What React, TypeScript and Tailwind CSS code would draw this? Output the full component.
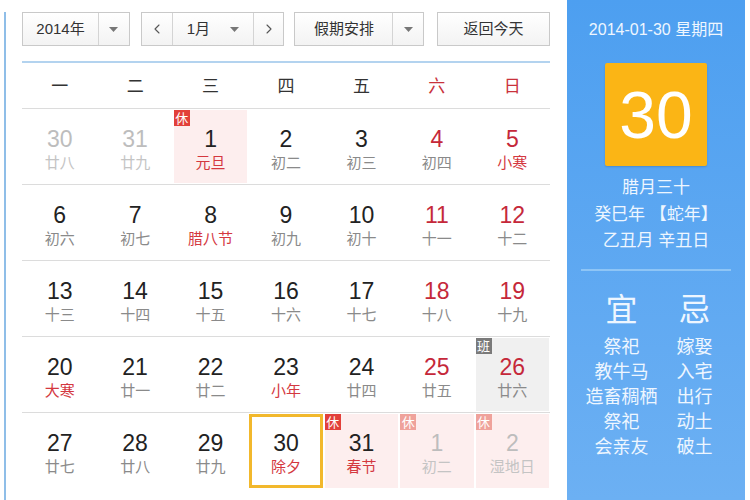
import { ChevronLeft, ChevronRight } from 'lucide-react';

type Day = {
  n: number;
  lunar: string;
  other?: boolean;
  redNum?: boolean;
  redLunar?: boolean;
  bg?: 'rest' | 'work';
  badge?: 'rest' | 'restLight' | 'work';
  today?: boolean;
};

const WEEK = ['一', '二', '三', '四', '五', '六', '日'];

const ROWS: Day[][] = [
  [
    { n: 30, lunar: '廿八', other: true },
    { n: 31, lunar: '廿九', other: true },
    { n: 1, lunar: '元旦', redLunar: true, bg: 'rest', badge: 'rest' },
    { n: 2, lunar: '初二' },
    { n: 3, lunar: '初三' },
    { n: 4, lunar: '初四', redNum: true },
    { n: 5, lunar: '小寒', redNum: true, redLunar: true },
  ],
  [
    { n: 6, lunar: '初六' },
    { n: 7, lunar: '初七' },
    { n: 8, lunar: '腊八节', redLunar: true },
    { n: 9, lunar: '初九' },
    { n: 10, lunar: '初十' },
    { n: 11, lunar: '十一', redNum: true },
    { n: 12, lunar: '十二', redNum: true },
  ],
  [
    { n: 13, lunar: '十三' },
    { n: 14, lunar: '十四' },
    { n: 15, lunar: '十五' },
    { n: 16, lunar: '十六' },
    { n: 17, lunar: '十七' },
    { n: 18, lunar: '十八', redNum: true },
    { n: 19, lunar: '十九', redNum: true },
  ],
  [
    { n: 20, lunar: '大寒', redLunar: true },
    { n: 21, lunar: '廿一' },
    { n: 22, lunar: '廿二' },
    { n: 23, lunar: '小年', redLunar: true },
    { n: 24, lunar: '廿四' },
    { n: 25, lunar: '廿五', redNum: true },
    { n: 26, lunar: '廿六', redNum: true, bg: 'work', badge: 'work' },
  ],
  [
    { n: 27, lunar: '廿七' },
    { n: 28, lunar: '廿八' },
    { n: 29, lunar: '廿九' },
    { n: 30, lunar: '除夕', redLunar: true, today: true },
    { n: 31, lunar: '春节', redLunar: true, bg: 'rest', badge: 'rest' },
    { n: 1, lunar: '初二', other: true, bg: 'rest', badge: 'restLight' },
    { n: 2, lunar: '湿地日', other: true, bg: 'rest', badge: 'restLight' },
  ],
];

const YI = ['祭祀', '教牛马', '造畜稠栖', '祭祀', '会亲友'];
const JI = ['嫁娶', '入宅', '出行', '动土', '破土'];

function Caret() {
  return (
    <svg width="9" height="5" viewBox="0 0 9 5" aria-hidden>
      <path d="M0 0h9L4.5 5z" fill="#777" />
    </svg>
  );
}

function Cell({ d }: { d: Day }) {
  const bg =
    d.bg === 'rest' ? 'bg-[#fdeeee]' : d.bg === 'work' ? 'bg-[#f0f0f0]' : 'bg-white';
  const numColor = d.other
    ? 'text-[#bdbdbd]'
    : d.redNum
      ? 'text-[#c5283a]'
      : 'text-[#222]';
  const lunarColor = d.other
    ? 'text-[#c4c4c4]'
    : d.redLunar
      ? 'text-[#d4383f]'
      : 'text-[#8a8a8a]';
  return (
    <div
      className={`relative m-[1px] flex flex-col items-center ${bg} ${
        d.today ? 'border-[3px] border-[#f2b82c] pt-[13px]' : 'pt-[16px]'
      }`}
    >
      {d.badge ? (
        <span
          className={`absolute left-0 top-0 flex h-[16px] w-[16px] items-center justify-center text-[13px] leading-none text-white ${
            d.badge === 'rest'
              ? 'bg-[#e2403a]'
              : d.badge === 'restLight'
                ? 'bg-[#efa29b]'
                : 'bg-[#7a7a7a]'
          }`}
        >
          {d.badge === 'work' ? '班' : '休'}
        </span>
      ) : null}
      <span className={`text-[23px] leading-[26px] ${numColor}`}>{d.n}</span>
      <span className={`mt-[2px] text-[15px] leading-[18px] ${lunarColor}`}>{d.lunar}</span>
    </div>
  );
}

export default function App() {
  return (
    <div
      className="flex h-[500px] w-[750px] bg-white"
      style={{ fontFamily: '"Liberation Sans", "Noto Sans CJK SC", sans-serif' }}
    >
      <div className="w-[567px] shrink-0 pl-[4px]">
        <div className="h-full border-l-2 border-[#8fbee8] pl-[16px]">
          <div className="w-[528px]">
            {/* toolbar */}
            <div className="mt-[12px] flex h-[34px] items-stretch text-[15px] text-[#333]">
              <div className="flex w-[108px] border border-[#c9c9c9] bg-gradient-to-b from-white to-[#f3f3f3]">
                <span className="flex w-[75px] items-center justify-center">2014年</span>
                <span className="flex flex-1 items-center justify-center border-l border-[#d4d4d4]">
                  <Caret />
                </span>
              </div>
              <div className="ml-[11px] flex w-[144px] border border-[#c9c9c9] bg-gradient-to-b from-white to-[#f3f3f3]">
                <span className="flex w-[31px] items-center justify-center border-r border-[#d4d4d4] text-[#555]">
                  <ChevronLeft size={16} strokeWidth={1.6} />
                </span>
                <span className="flex flex-1 items-center pl-[14px]">
                  <span>1月</span>
                  <span className="ml-auto mr-[14px] flex">
                    <Caret />
                  </span>
                </span>
                <span className="flex w-[30px] items-center justify-center border-l border-[#d4d4d4] text-[#555]">
                  <ChevronRight size={16} strokeWidth={1.6} />
                </span>
              </div>
              <div className="ml-[10px] flex w-[130px] border border-[#c9c9c9] bg-gradient-to-b from-white to-[#f3f3f3]">
                <span className="flex w-[97px] items-center justify-center">假期安排</span>
                <span className="flex flex-1 items-center justify-center border-l border-[#d4d4d4]">
                  <Caret />
                </span>
              </div>
              <div className="ml-[13px] flex w-[113px] items-center justify-center border border-[#c9c9c9] bg-gradient-to-b from-white to-[#f3f3f3]">
                返回今天
              </div>
            </div>
            <div className="mt-[15px] h-[2px] bg-[#b3d3ef]" />
            {/* week header */}
            <div className="grid h-[46px] grid-cols-7 items-center border-b border-[#dcdcdc] pt-[2px] text-[17px]">
              {WEEK.map((w, i) => (
                <span
                  key={w}
                  className={`text-center ${i >= 5 ? 'text-[#c9323b]' : 'text-[#333]'}`}
                >
                  {w}
                </span>
              ))}
            </div>
            {ROWS.map((row, ri) => (
              <div
                key={ri}
                className={`grid h-[76px] grid-cols-7 ${
                  ri < ROWS.length - 1 ? 'border-b border-[#dcdcdc]' : ''
                }`}
              >
                {row.map((d, ci) => (
                  <Cell key={ci} d={d} />
                ))}
              </div>
            ))}
          </div>
        </div>
      </div>

      {/* side panel */}
      <div className="flex w-[178px] shrink-0 flex-col items-center bg-gradient-to-b from-[#4d9ff0] to-[#6cb0f3] text-[#eef6ff]">
        <div className="mt-[20px] text-[16px] leading-[20px]">2014-01-30 星期四</div>
        <div className="mt-[23px] flex h-[103px] w-[102px] items-center justify-center rounded-[2px] bg-[#fbb515] text-[66px] leading-none text-white shadow-[0_1px_2px_rgba(0,0,0,0.15)]">
          30
        </div>
        <div className="mt-[9px] flex flex-col items-center text-[17px] leading-[26.5px]">
          <span>腊月三十</span>
          <span>癸巳年 【蛇年】</span>
          <span>乙丑月 辛丑日</span>
        </div>
        <div className="mt-[14px] h-[2px] w-[150px] bg-[#8ec5f6]" />
        <div className="mt-[19px] grid w-[150px] grid-cols-2 pl-[4px]">
          {[
            { head: '宜', items: YI },
            { head: '忌', items: JI },
          ].map((col) => (
            <div key={col.head} className="flex flex-col items-center">
              <span className="text-[32px] leading-[40px]">{col.head}</span>
              <div className="mt-[5px] flex flex-col items-center text-[18px] leading-[25px]">
                {col.items.map((t, i) => (
                  <span key={i}>{t}</span>
                ))}
              </div>
            </div>
          ))}
        </div>
      </div>
      <div className="flex-1 bg-white" />
    </div>
  );
}
